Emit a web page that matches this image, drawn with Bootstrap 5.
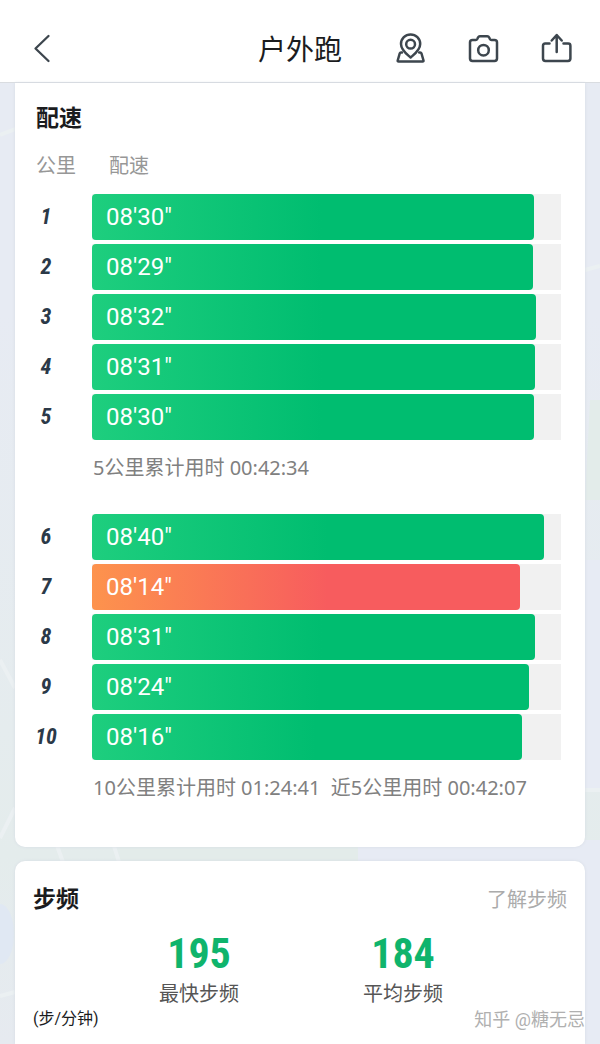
<!DOCTYPE html>
<html lang="zh-CN">
<head>
<meta charset="utf-8">
<meta name="viewport" content="width=device-width, initial-scale=1">
<title>户外跑</title>
<link rel="stylesheet" href="https://cdn.jsdelivr.net/npm/bootstrap@5.3.0/dist/css/bootstrap.min.css">
<script src="https://cdn.jsdelivr.net/npm/bootstrap@5.3.0/dist/js/bootstrap.bundle.min.js"></script>
<style>
  body {
    font-family: Roboto, "Noto Sans CJK SC", sans-serif;
    color: #1b1c1e;
    background: linear-gradient(#e7ebf3 30%, #e5ecee 70%, #e4ecec 82%, #e6eaf0);
  }
  .map-bg { z-index: -1; }
  .topbar { height: 83px; padding: 14px 28px 0 32px; border-bottom: 1px solid #d9dce0; }
  .topbar h1 { font-size: 28px; line-height: 40px; padding-top: 6px; }
  .icon-btn { border: 0; background: none; padding: 0; line-height: 0; color: #3d464e; }
  .side { flex: 1 1 0; }
  .tools { gap: 41px; }
  .panel { margin: 0 15px; background: #fff; border-radius: 0 0 10px 10px; box-shadow: 0 0 3px #d5dbe3; }
  .panel-pace { padding: 19px 24px 44px 21px; }
  .panel-cadence { margin-top: 14px; padding: 22px 18px 8px; border-radius: 10px 10px 0 0; }
  .panel h2 { font-size: 23px; line-height: 34px; font-weight: 700; }
  .pace-table { table-layout: fixed; border-collapse: collapse; margin-top: 15px; }
  .pace-table thead th { font-size: 20px; line-height: 30px; font-weight: 400; color: #979797; padding: 0 0 13px; white-space: nowrap; }
  .pace-table thead th + th { padding-left: 17px; }
  .col-km { width: 56px; }
  .pace-table tbody th, .pace-table tbody td { padding: 0 0 4px; }
  .km-no { display: flex; justify-content: center; width: 20px; font: italic 700 22px/44px "Roboto Condensed", Roboto, sans-serif; color: #2b3948; }
  .track { background: #f1f1f1; height: 46px; }
  .fill { height: 46px; padding-left: 14px; border-radius: 4px; font-size: 24px; line-height: 46px; color: #fff; background: linear-gradient(90deg, #1ece7e, #00bd70 52%); }
  .fill-best { background: linear-gradient(90deg, #fd934d, #f75c5e 55%); }
  .pace-table tbody .sum { font-family: "Noto Sans", "Noto Sans CJK SC", sans-serif; font-size: 20px; line-height: 30px; color: #808080; padding: 9px 0 31px 1px; white-space: pre; }
  .pace-table tbody:last-child .sum { padding-bottom: 0; }
  .more { font-size: 20px; line-height: 34px; color: #ababab; text-decoration: none; }
  .stats { gap: 124px; margin: 12px 0 0 2px; }
  .stat-num { font: 700 42px/50px "Roboto Condensed", Roboto, sans-serif; color: #0fb46c; }
  .stat-name { font-size: 20px; line-height: 30px; color: #555; }
  .unit { font-size: 16px; line-height: 20px; }
  .stamp { right: 15px; bottom: 11px; font-size: 18px; line-height: 26px; color: #b0b0b0; text-shadow: -1px -1px 0 #fff; }
</style>
</head>
<body class="d-flex flex-column min-vh-100 position-relative">
<svg class="map-bg position-absolute top-0 start-0 w-100 h-100" viewBox="0 0 600 1044" preserveAspectRatio="none" aria-hidden="true">
  <path fill="#e3ecea" d="M120 840H358V870H120ZM590 400H600V500H585Z"/>
  <path fill="#e7ebf4" d="M358 840H600V1044H585V870H358ZM585 560H600V790H585Z"/>
  <ellipse cx="0" cy="934" rx="14" ry="30" fill="#e0e8f3"/>
  <path fill="none" stroke="#ebf0f2" stroke-width="4" d="M0 135L18 128M0 660L15 688M0 838L15 808M55 840L64 865M112 840L120 865M0 996L15 992M585 270L600 266M585 790H600"/>
</svg>

<header class="topbar d-flex align-items-center bg-white">
  <div class="side d-flex">
    <button class="icon-btn" type="button" aria-label="返回">
      <svg width="20" height="30" viewBox="0 0 20 30" fill="none" stroke="currentColor" stroke-width="2.3" stroke-linecap="round" stroke-linejoin="round"><path d="M16.500 3L3.500 15.500L16.500 28"/></svg>
    </button>
  </div>
  <h1 class="mb-0 me-1 fw-normal">户外跑</h1>
  <div class="side tools d-flex justify-content-end">
    <button class="icon-btn" type="button" aria-label="轨迹">
      <svg width="32" height="32" viewBox="0 0 32 32" fill="none" stroke="currentColor" stroke-width="2.500" stroke-linejoin="round" stroke-linecap="round"><path d="M16.600 25.500C12.600 22 7 18.200 7 12A9.600 9.600 0 0 1 26.200 12C26.200 18.200 20.600 22 16.600 25.500Z"/><circle cx="16.600" cy="12.200" r="4.400"/><path d="M8 20.500H7Q6.100 20.500 5.700 21.500L3.700 28.500Q3.500 29.500 4.500 29.500H28.700Q29.700 29.500 29.500 28.500L27.500 21.500Q27.100 20.500 26.200 20.500H25.200"/></svg>
    </button>
    <button class="icon-btn" type="button" aria-label="拍照">
      <svg width="32" height="32" viewBox="0 0 32 32" fill="none" stroke="currentColor" stroke-width="2.500" stroke-linejoin="round"><path d="M5.500 8H8.700Q9.800 8 10.300 7L11 5.500Q11.600 4.300 12.900 4.300H20.300Q21.600 4.300 22.200 5.500L22.900 7Q23.400 8 24.500 8H27.500Q30 8 30 10.300V26.500Q30 28.900 27.500 28.900H5.500Q3 28.900 3 26.500V10.300Q3 8 5.500 8Z"/><circle cx="16.500" cy="18.200" r="5.300"/></svg>
    </button>
    <button class="icon-btn" type="button" aria-label="分享">
      <svg width="32" height="32" viewBox="0 0 32 32" fill="none" stroke="currentColor" stroke-width="2.500" stroke-linecap="round" stroke-linejoin="round"><path d="M9.500 11.500H5.200Q3 11.500 3 13.700V26.500Q3 28.900 5.400 28.900H28Q30.400 28.900 30.400 26.500V13.700Q30.400 11.500 28.200 11.500H23.500"/><path d="M16.700 20V3.500M11.700 8.500L16.700 3L21.700 8.500"/></svg>
    </button>
  </div>
</header>

<main class="d-flex flex-column flex-grow-1">
  <section class="panel panel-pace">
    <h2 class="m-0">配速</h2>
    <table class="pace-table w-100">
      <colgroup><col class="col-km"><col></colgroup>
      <thead><tr><th scope="col">公里</th><th scope="col">配速</th></tr></thead>
      <tbody>
        <tr><th scope="row"><span class="km-no">1</span></th><td><div class="track"><div class="fill" style="width:94.3%">08'30"</div></div></td></tr>
        <tr><th scope="row"><span class="km-no">2</span></th><td><div class="track"><div class="fill" style="width:94%">08'29"</div></div></td></tr>
        <tr><th scope="row"><span class="km-no">3</span></th><td><div class="track"><div class="fill" style="width:94.7%">08'32"</div></div></td></tr>
        <tr><th scope="row"><span class="km-no">4</span></th><td><div class="track"><div class="fill" style="width:94.5%">08'31"</div></div></td></tr>
        <tr><th scope="row"><span class="km-no">5</span></th><td><div class="track"><div class="fill" style="width:94.3%">08'30"</div></div></td></tr>
        <tr><td></td><td class="sum">5公里累计用时 00:42:34</td></tr>
      </tbody>
      <tbody>
        <tr><th scope="row"><span class="km-no">6</span></th><td><div class="track"><div class="fill" style="width:96.3%">08'40"</div></div></td></tr>
        <tr><th scope="row"><span class="km-no">7</span></th><td><div class="track"><div class="fill fill-best" style="width:91.3%">08'14"</div></div></td></tr>
        <tr><th scope="row"><span class="km-no">8</span></th><td><div class="track"><div class="fill" style="width:94.5%">08'31"</div></div></td></tr>
        <tr><th scope="row"><span class="km-no">9</span></th><td><div class="track"><div class="fill" style="width:93.1%">08'24"</div></div></td></tr>
        <tr><th scope="row"><span class="km-no">10</span></th><td><div class="track"><div class="fill" style="width:91.6%">08'16"</div></div></td></tr>
        <tr><td></td><td class="sum">10公里累计用时 01:24:41  近5公里用时 00:42:07</td></tr>
      </tbody>
    </table>
  </section>

  <section class="panel panel-cadence flex-grow-1">
    <div class="d-flex justify-content-between">
      <h2 class="m-0">步频</h2>
      <a class="more" href="#">了解步频</a>
    </div>
    <div class="stats d-flex justify-content-center text-center">
      <div><div class="stat-num">195</div><div class="stat-name">最快步频</div></div>
      <div><div class="stat-num">184</div><div class="stat-name">平均步频</div></div>
    </div>
    <div class="unit">(步/分钟)</div>
  </section>
</main>
<div class="stamp position-absolute">知乎 @糖无忌</div>
</body>
</html>
